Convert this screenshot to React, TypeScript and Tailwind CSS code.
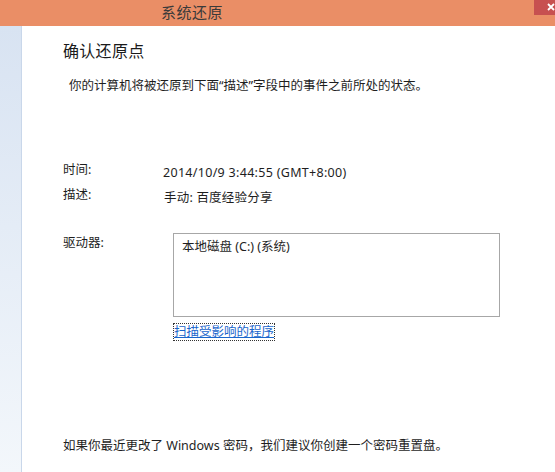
const FONT = "font-['Noto_Sans','Noto_Sans_CJK_SC',sans-serif]";

function TitleBar() {
  return (
    <div className="relative h-[26px] shrink-0 bg-[#ea8e66]">
      <div className="absolute left-[161px] top-[2px] text-[15px] leading-[20px] tracking-[0.5px] text-[#3a3a3a]">系统还原</div>
      <div className="absolute right-0 top-0 h-[15px] w-[21px] bg-[#c75050]">
        <svg width="21" height="15" viewBox="0 0 21 15">
          <path d="M14 4 L20 10 M20 4 L14 10" stroke="#fff" strokeWidth="1.8" />
        </svg>
      </div>
    </div>
  );
}

function Row({ label, value, valueClass }: { label: string; value: string; valueClass: string }) {
  return (
    <div className="flex text-[12.5px] leading-[16px] text-[#1e1e1e]">
      <div className="w-[100px] -translate-y-[3px]">{label}</div>
      <div className={valueClass}>{value}</div>
    </div>
  );
}

export default function App() {
  return (
    <div className={`flex h-[472px] w-[555px] flex-col overflow-hidden bg-white ${FONT}`}>
      <TitleBar />
      <div className="flex flex-1">
        <div className="w-[22px] shrink-0 border-r border-[#c9d7ea] bg-gradient-to-b from-[#d8e3f2] to-[#f3f7fb]" />
        <div className="flex flex-1 flex-col pl-[41px]">
          <h1 className="mt-[15px] text-[16px] leading-[20px] tracking-[0.3px] text-[#1a1a1a]">确认还原点</h1>
          <p className="mt-[17px] pl-[6px] text-[12.5px] leading-[16px] text-[#1e1e1e]">
            你的计算机将被还原到下面“描述”字段中的事件之前所处的状态。
          </p>

          <div className="mt-[68px] flex flex-col gap-[12px]">
            <div className="translate-y-[3px]">
              <Row label="时间:" value="2014/10/9 3:44:55 (GMT+8:00)" valueClass="tracking-[0.3px]" />
            </div>
            <Row label="描述:" value="手动: 百度经验分享" valueClass="translate-x-[1px] tracking-[0.2px]" />
          </div>

          <div className="mt-[27px] flex text-[12.5px] leading-[16px] text-[#1e1e1e]">
            <div className="w-[110px] pt-[2px]">驱动器:</div>
            <div className="flex flex-col">
              <div className="h-[84px] w-[327px] border border-[#a7a7a7] px-[8px] pt-[5px]">
                本地磁盘 (C:) (系统)
              </div>
              <a className="mt-[6px] self-start border border-dotted border-[#333] text-[12.5px] leading-[16px] text-[#1a66cc] underline">
                扫描受影响的程序
              </a>
            </div>
          </div>

          <p className="mt-auto mb-[18px] text-[12.5px] leading-[16px] text-[#1e1e1e]">
            如果你最近更改了 Windows 密码，我们建议你创建一个密码重置盘。
          </p>
        </div>
      </div>
    </div>
  );
}
